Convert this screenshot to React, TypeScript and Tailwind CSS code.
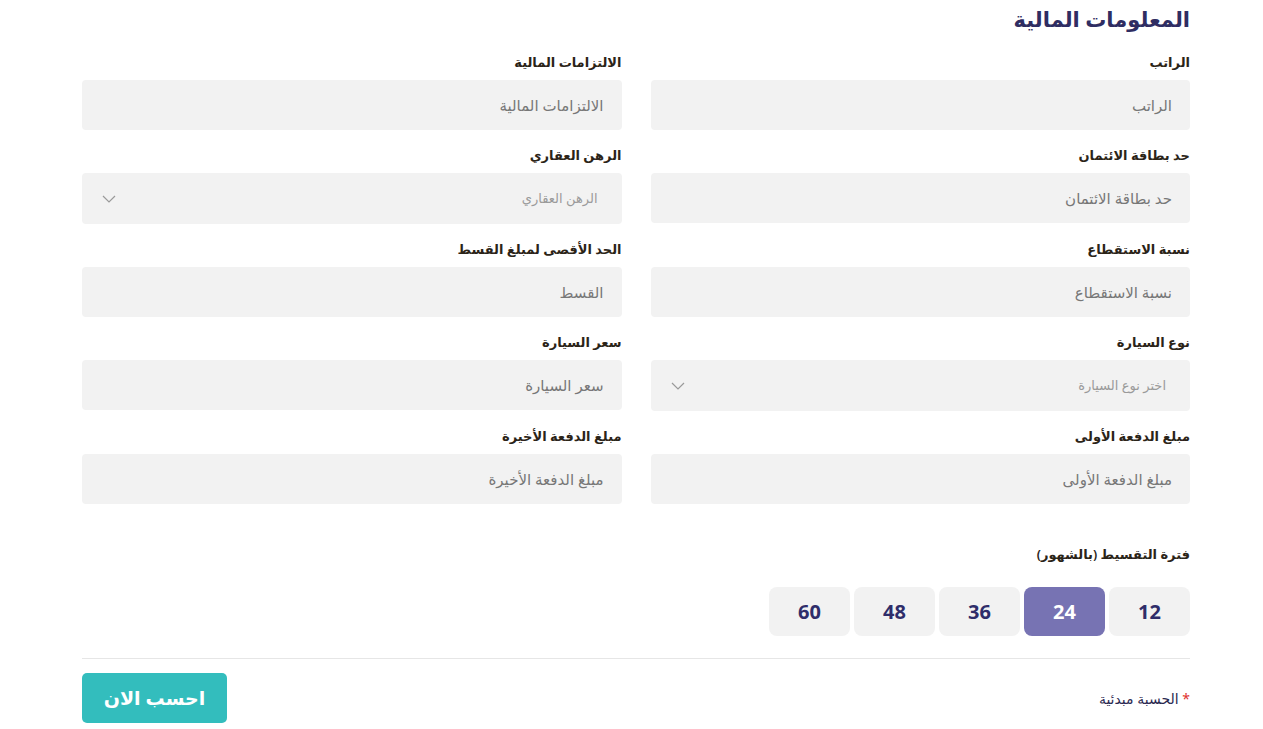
import React from 'react';

const font = { fontFamily: '"Noto Sans", "DejaVu Sans", sans-serif' };

function Field({ label, placeholder, select }: { label: string; placeholder: string; select?: boolean }) {
  return (
    <div className="flex flex-col">
      <label className="text-[13px] font-semibold text-[#2b2418] leading-5 mb-[8px]">{label}</label>
      {select ? (
        <div className="h-[51px] bg-[#f2f2f2] rounded-[4px] flex items-center justify-between pr-[24px] pl-[20px]">
          <span className="text-[13px] text-[#9a9a9a]">{placeholder}</span>
          <svg width="14" height="8" viewBox="0 0 14 8" fill="none" stroke="#9a9a9a" strokeWidth="1.2">
            <path d="M1 1l6 6 6-6" />
          </svg>
        </div>
      ) : (
        <div className="h-[50px] bg-[#f2f2f2] rounded-[4px] flex items-center pr-[18px]">
          <span className="text-[15px] text-[#777777]">{placeholder}</span>
        </div>
      )}
    </div>
  );
}

export default function App() {
  const months = [12, 24, 36, 48, 60];
  return (
    <div dir="rtl" className="bg-white min-h-screen" style={font}>
      <div className="w-[1108px] mr-[73px] pt-[4px]">
        <h2 className="text-[21px] font-semibold text-[#2f2d62] leading-[30px]">المعلومات المالية</h2>
        <div className="grid grid-cols-2 gap-x-[29px] gap-y-[15px] mt-[18px]">
          <Field label="الراتب" placeholder="الراتب" />
          <Field label="الالتزامات المالية" placeholder="الالتزامات المالية" />
          <Field label="حد بطاقة الائتمان" placeholder="حد بطاقة الائتمان" />
          <Field label="الرهن العقاري" placeholder="الرهن العقاري" select />
          <Field label="نسبة الاستقطاع" placeholder="نسبة الاستقطاع" />
          <Field label="الحد الأقصى لمبلغ القسط" placeholder="القسط" />
          <Field label="نوع السيارة" placeholder="اختر نوع السيارة" select />
          <Field label="سعر السيارة" placeholder="سعر السيارة" />
          <Field label="مبلغ الدفعة الأولى" placeholder="مبلغ الدفعة الأولى" />
          <Field label="مبلغ الدفعة الأخيرة" placeholder="مبلغ الدفعة الأخيرة" />
        </div>
        <div className="mt-[40px]">
          <div className="text-[13px] font-semibold text-[#2b2418] leading-5">فترة التقسيط (بالشهور)</div>
          <div className="flex gap-[4px] mt-[23px]">
            {months.map((m) => (
              <button
                key={m}
                className={
                  m === 24
                    ? 'w-[81px] h-[49px] rounded-[8px] bg-[#7773b3] text-white text-[20px] font-bold'
                    : 'w-[81px] h-[49px] rounded-[8px] bg-[#f2f2f2] text-[#2f2d6a] text-[20px] font-bold'
                }
              >
                {m}
              </button>
            ))}
          </div>
        </div>
        <div className="border-t border-[#e6e6e6] mt-[22px]" />
        <div className="flex items-center justify-between mt-[14px]">
          <div className="text-[14px] text-[#2a2850]">
            <span className="text-[#e0322f]">*</span> الحسبة مبدئية
          </div>
          <button className="w-[145px] h-[50px] rounded-[5px] bg-[#33bdbd] text-white text-[19px] font-semibold">احسب الان</button>
        </div>
      </div>
    </div>
  );
}
